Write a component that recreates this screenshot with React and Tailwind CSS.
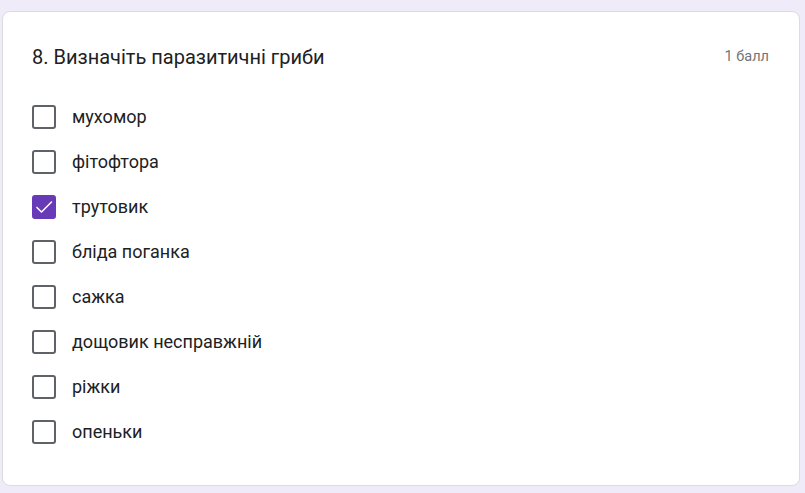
const OPTIONS = [
  { label: "мухомор" },
  { label: "фітофтора" },
  { label: "трутовик", checked: true },
  { label: "бліда поганка" },
  { label: "сажка" },
  { label: "дощовик несправжній" },
  { label: "ріжки" },
  { label: "опеньки" },
];

export default function App() {
  return (
    <div className="h-[493px] w-[805px] bg-[#f0ebf8] pt-[11px] pl-[2px] pr-[5px]">
      <div
        className="h-[475px] rounded-lg border border-[#dadce0] bg-white pl-[29px] pr-[30px] pt-[33px]"
        style={{ fontFamily: "Roboto, 'Noto Sans', sans-serif" }}
      >
        <div className="flex h-6 items-center justify-between">
          <h2 className="text-[20px] leading-6 text-[#202124]">8. Визначіть паразитичні гриби</h2>
          <span className="text-[14.5px] text-[#70757a]">1 балл</span>
        </div>

        <div className="mt-[25px] flex flex-col">
          {OPTIONS.map((o) => (
            <label key={o.label} className="flex h-[45px] items-center gap-4">
              <Checkbox checked={o.checked} />
              <span className="text-[18px] text-[#202124]">{o.label}</span>
            </label>
          ))}
        </div>
      </div>
    </div>
  );
}

function Checkbox({ checked }) {
  if (checked) {
    return (
      <span className="flex h-6 w-6 items-center justify-center rounded-[3px] bg-[#673ab7]">
        <svg width="20" height="20" viewBox="0 0 24 24" fill="none">
          <path d="M3.5 12.5l5.5 5.5L21 6" stroke="white" strokeWidth="1.8" strokeLinecap="round" strokeLinejoin="round" />
        </svg>
      </span>
    );
  }
  return <span className="h-6 w-6 rounded-[3px] border-2 border-[#5f6368]" />;
}
